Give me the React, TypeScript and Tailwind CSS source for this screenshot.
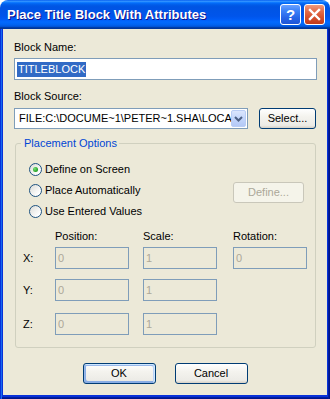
import React from 'react'

const btn =
  'flex items-center justify-center rounded-[3px] border border-[#003c74] bg-[linear-gradient(180deg,#ffffff_0%,#f4f3ee_40%,#ecebe6_86%,#d6d0c5_100%)] text-black'

function Radio({ checked }: { checked?: boolean }) {
  return (
    <div className="w-[13px] h-[13px] rounded-full border border-[#1d5281] bg-[linear-gradient(135deg,#dcdcd7_0%,#ffffff_80%)] flex items-center justify-center">
      {checked && (
        <div className="w-[5px] h-[5px] rounded-full bg-[radial-gradient(circle_at_35%_35%,#7be07a,#21a121_70%,#0c8a0c)]" />
      )}
    </div>
  )
}

function DisabledBox({ value, w = 'w-[74px]' }: { value: string; w?: string }) {
  return (
    <div className={`${w} h-[22px] border border-[#7f9db9] bg-[#ece9d8] flex items-center pl-[2px] text-[#aca899]`}>
      {value}
    </div>
  )
}

export default function App() {
  return (
    <div className="w-[330px] h-[399px] bg-white font-['Liberation_Sans',Arial,sans-serif]">
      <div className="w-[330px] h-[399px] flex flex-col rounded-t-[8px] overflow-hidden">
        {/* Title bar */}
        <div className="h-[29px] flex items-center pl-[7px] pr-[5px] bg-[linear-gradient(180deg,#0058ee_0%,#3593ff_4%,#288eff_6%,#127dff_8%,#036ffc_10%,#0262ee_14%,#0057e5_20%,#0054e3_24%,#0055eb_56%,#005bf5_66%,#026afe_76%,#0062ef_86%,#0052d6_92%,#0040ab_94%,#003092_100%)]">
          <div className="flex-1 text-white font-bold text-[13px] leading-[16px] [text-shadow:1px_1px_#0f1089] whitespace-nowrap">
            Place Title Block With Attributes
          </div>
          <div className="w-[21px] h-[21px] rounded-[3px] border border-white bg-[linear-gradient(180deg,#6aa1ff_0%,#3c82f8_30%,#2563e6_70%,#1c55d6_100%)] flex items-center justify-center text-white font-bold text-[15px] leading-none">
            ?
          </div>
          <div className="ml-[3px] w-[21px] h-[21px] rounded-[3px] border border-white bg-[linear-gradient(180deg,#f09a7e_0%,#e36a47_35%,#d24d2a_70%,#c23a1a_100%)] flex items-center justify-center">
            <svg width="13" height="13" viewBox="0 0 13 13">
              <path d="M2 2 L11 11 M11 2 L2 11" stroke="#ffffff" strokeWidth="2.4" strokeLinecap="square" />
            </svg>
          </div>
        </div>

        {/* Frame + client */}
        <div className="flex-1 flex flex-col bg-[#0831d9] px-[3px] pb-[4px] shadow-[inset_1px_0_#0831d9,inset_2px_0_#166aee,inset_-1px_0_#00138c,inset_-2px_0_#001ea0,inset_0_-1px_#00138c,inset_0_-2px_#001ea0]">
          <div className="flex-1 bg-[#ece9d8] flex flex-col text-[11px] leading-[13px] text-black">
            <div className="pl-[11px] flex flex-col">
              <div className="mt-[12px] h-[13px]">Block Name:</div>
              <div className="mt-[4px] w-[303px] h-[22px] border border-[#7f9db9] bg-white flex items-center pl-[2px]">
                <span className="bg-[#316ac5] text-white px-[1px] leading-[15px]">TITLEBLOCK</span>
              </div>

              <div className="mt-[10px] h-[13px]">Block Source:</div>
              <div className="mt-[5px] flex items-center h-[21px]">
                <div className="w-[234px] h-[21px] border border-[#7f9db9] bg-white flex items-center p-[1px]">
                  <div className="flex-1 min-w-0 overflow-hidden whitespace-nowrap pl-[3px]">
                    {'FILE:C:\\DOCUME~1\\PETER~1.SHA\\LOCA'}
                  </div>
                  <div className="shrink-0 w-[15px] h-[17px] rounded-[2px] border border-[#b9cdf5] bg-[linear-gradient(180deg,#dbe6fd_0%,#c4d6fb_50%,#b4c9f6_100%)] flex items-center justify-center">
                    <svg width="9" height="6" viewBox="0 0 9 6">
                      <path d="M1 1 L4.5 4.5 L8 1" fill="none" stroke="#4d6185" strokeWidth="2" />
                    </svg>
                  </div>
                </div>
                <div className={`${btn} ml-[11px] w-[57px] h-[21px]`}>Select...</div>
              </div>

              {/* Group box */}
              <div className="mt-[14px] ml-[1px] w-[301px] h-[205px] relative border border-[#d0d0bf] rounded-[3px] flex flex-col">
                <div className="absolute left-[5px] top-[-7px] pl-[3px] pr-[2px] bg-[#ece9d8] text-[#0046d5] leading-[13px]">
                  Placement Options
                </div>

                <div className="mt-[15px] h-[21px] flex items-center pl-[13px]">
                  <Radio checked />
                  <span className="ml-[3px]">Define on Screen</span>
                </div>
                <div className="h-[21px] flex items-start pl-[13px]">
                  <div className="h-[21px] flex items-center">
                    <Radio />
                    <span className="ml-[3px]">Place Automatically</span>
                  </div>
                  <div className="ml-auto mr-[11px] mt-[2px] w-[71px] h-[21px] rounded-[3px] border border-[#c9c7ba] bg-[#f5f4ea] text-[#aca899] flex items-center justify-center">
                    Define...
                  </div>
                </div>
                <div className="h-[21px] flex items-center pl-[13px]">
                  <Radio />
                  <span className="ml-[3px]">Use Entered Values</span>
                </div>

                {/* Coordinates */}
                <div className="mt-[8px] h-[13px] flex pl-[39px]">
                  <div className="w-[74px]">Position:</div>
                  <div className="ml-[14px] w-[74px]">Scale:</div>
                  <div className="ml-[16px] w-[74px]">Rotation:</div>
                </div>
                <div className="mt-[4px] h-[22px] flex items-center">
                  <div className="w-[39px] pl-[7px]">X:</div>
                  <DisabledBox value="0" />
                  <div className="ml-[14px]"><DisabledBox value="1" /></div>
                  <div className="ml-[16px]"><DisabledBox value="0" /></div>
                </div>
                <div className="mt-[10px] h-[22px] flex items-center">
                  <div className="w-[39px] pl-[7px]">Y:</div>
                  <DisabledBox value="0" />
                  <div className="ml-[14px]"><DisabledBox value="1" /></div>
                </div>
                <div className="mt-[12px] h-[22px] flex items-center">
                  <div className="w-[39px] pl-[7px]">Z:</div>
                  <DisabledBox value="0" />
                  <div className="ml-[14px]"><DisabledBox value="1" /></div>
                </div>
              </div>
            </div>

            {/* Buttons */}
            <div className="mt-[15px] flex justify-center gap-[19px]">
              <div className={`${btn} w-[73px] h-[21px] shadow-[inset_-1px_1px_#cee7ff,inset_1px_2px_#98b8ea,inset_-2px_2px_#bcd4f6,inset_1px_-1px_#89ade4,inset_2px_-2px_#89ade4]`}>
                OK
              </div>
              <div className={`${btn} w-[73px] h-[21px]`}>Cancel</div>
            </div>
          </div>
        </div>
      </div>
    </div>
  )
}
